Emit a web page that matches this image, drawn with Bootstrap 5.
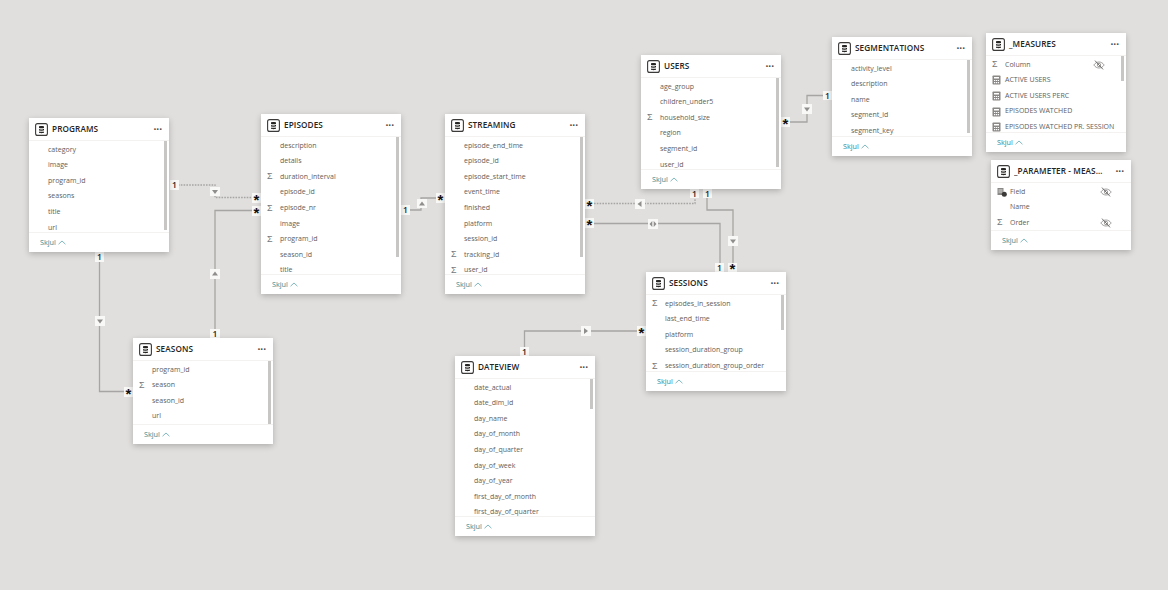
<!DOCTYPE html>
<html lang="en">
<head>
<meta charset="UTF-8">
<title>Model</title>
<link href="https://cdn.jsdelivr.net/npm/bootstrap@5.3.0/dist/css/bootstrap.min.css" rel="stylesheet">
<style>
html, body { margin: 0; background: #e1dfdd; }
#canvas { position: relative; width: 1168px; height: 590px; overflow: hidden; background: #e1dfdd; font-family: "Open Sans", "Liberation Sans", sans-serif; }
#lines { position: absolute; left: 0; top: 0; }
#lines .ln { fill: none; stroke: #a6a5a3; stroke-width: 1.3; }
#lines .dot { stroke-dasharray: 1.6 1.2; }
#lines .bx { fill: #f8f8f7; }
#lines .ar { fill: #8f8e8c; }
#lines text { font-family: "Open Sans", "Liberation Sans", sans-serif; font-size: 8.5px; font-weight: 600; fill: #252423; text-anchor: middle; }
#lines text.st { font-family: "Liberation Sans", sans-serif; font-size: 15px; font-weight: 700; fill: #111; }
.tbl { position: absolute; width: 140px; background: #fff; box-shadow: 0 2px 6px rgba(0,0,0,.22); }
.tbl-head { height: 23px; padding: 0 6px; flex: none; border-bottom: 1px solid #f3f2f1; }
.tbl-title { font-size: 8.2px; font-weight: 600; color: #252423; margin-left: 4px; letter-spacing: .1px; }
.tbl-more { font-size: 10px; font-weight: 700; color: #444; margin-left: auto; padding-right: 1px; line-height: 1; }
.tbl-body { position: relative; flex: 1 1 auto; overflow: hidden; padding-top: 1px; }
.fld { height: 15.6px; padding-left: 6px; font-size: 7px; color: #605e5c; white-space: nowrap; }
.fld-ic { width: 13px; flex: none; font-size: 9px; color: #777; line-height: 1; font-family: "Liberation Sans", sans-serif; }
.tbl-foot { height: 20px; flex: none; padding-left: 11px; border-top: 1px solid #f3f2f1; font-size: 7.2px; color: #2f8c94; }
.tbl-foot svg { margin-left: 2px; }
.sb { position: absolute; top: 0; right: 2px; width: 3px; background: #c8c6c4; }
.eye { margin-left: auto; }
.eye-a { margin-right: 21px; }
.eye-b { margin-right: 19px; }
#t-programs { left: 29px; top: 118px; height: 134px; }
#t-episodes { left: 261px; top: 114px; height: 180px; }
#t-streaming { left: 445px; top: 114px; height: 180px; }
#t-users { left: 641px; top: 55px; height: 134px; }
#t-segments { left: 832px; top: 37px; height: 119px; }
#t-measures { left: 986px; top: 33px; height: 119px; }
#t-param { left: 991px; top: 160px; height: 90px; }
#t-sessions { left: 646px; top: 272px; height: 119px; }
#t-seasons { left: 133px; top: 338px; height: 106px; }
#t-dateview { left: 455px; top: 356px; height: 180px; }
#t-programs .sb { height: 89px; }
#t-episodes .sb, #t-streaming .sb { height: 120px; }
#t-users .sb { height: 89px; }
#t-segments .sb { height: 73px; }
#t-measures .sb { height: 25px; }
#t-sessions .sb { height: 35px; }
#t-seasons .sb { height: 63px; }
#t-dateview .sb { height: 30px; }
</style>
</head>
<body>
<svg width="0" height="0" class="d-block">
  <symbol id="i-table" viewBox="0 0 13 13">
    <rect x=".6" y=".6" width="11.8" height="11.8" rx="2" fill="#fff" stroke="#3b3a39" stroke-width="1.1"/>
    <path d="M4 3.4c0-.7 5-.7 5 0v1.4c0 .7-5 .7-5 0zM4 6c.8.6 4.200.6 5 0v1.300c-.8.6-4.200.6-5 0zM4 8.400c.8.6 4.200.6 5 0v1.200c0 .7-5 .7-5 0z" fill="#252423"/>
  </symbol>
  <symbol id="i-calc" viewBox="0 0 9 10">
    <rect x=".5" y=".5" width="8" height="9" rx=".8" fill="#8a8886"/>
    <path d="M2 2h5v1.500H2z" fill="#fff"/>
    <path d="M2 5h1.200v1H2zM3.900 5h1.200v1H3.900zM5.800 5H7v1H5.800zM2 7h1.200v1.300H2zM3.900 7h1.200v1.300H3.900zM5.800 7H7v1.300H5.800z" fill="#fff"/>
  </symbol>
  <symbol id="i-eye" viewBox="0 0 12 10">
    <path d="M.8 5C2.200 3 4 2 6 2s3.800 1 5.200 3C9.800 7 8 8 6 8S2.200 7 .8 5z" fill="none" stroke="#8a8886" stroke-width=".8"/>
    <circle cx="6" cy="5" r="1.700" fill="none" stroke="#8a8886" stroke-width=".8"/>
    <path d="M2 .6l8 8.800" stroke="#605e5c" stroke-width=".9"/>
  </symbol>
  <symbol id="i-field" viewBox="0 0 10 10">
    <path d="M.5 1h6v7h-6z" fill="#8a8886"/>
    <path d="M1.500 3h4M1.500 5h4" stroke="#fff" stroke-width=".7"/>
    <circle cx="7.300" cy="7.300" r="2.500" fill="#3b3a39"/>
  </symbol>
  <symbol id="i-up" viewBox="0 0 9 5">
    <path d="M.6 4.400 4.500.8l3.900 3.600" fill="none" stroke="#4a9aa3" stroke-width=".8"/>
  </symbol>
</svg>

<div id="canvas">
  <svg id="lines" width="1168" height="590" viewBox="0 0 1168 590">
    <path class="ln dot" d="M178 185H215V197.500H252"/>
    <path class="ln" d="M252 210.500H215V329"/>
    <path class="ln" d="M99.500 262V391.500H124"/>
    <path class="ln" d="M410 210H421V198H436"/>
    <path class="ln dot" d="M594 203.500H695V198"/>
    <path class="ln" d="M594 223.500H720V263"/>
    <path class="ln" d="M707 198V210H733V263"/>
    <path class="ln" d="M790 122H807V95.500H823"/>
    <path class="ln" d="M524.500 347V331H637"/>

    <g>
      <rect class="bx" x="170" y="180" width="9" height="10"/><text x="174.500" y="188">1</text>
      <rect class="bx" x="252" y="193" width="9" height="10"/><text class="st" x="256.500" y="205">*</text>
      <rect class="bx" x="252" y="206" width="9" height="10"/><text class="st" x="256.500" y="218">*</text>
      <rect class="bx" x="95" y="252" width="9" height="10"/><text x="99.500" y="260">1</text>
      <rect class="bx" x="124" y="387" width="9" height="10"/><text class="st" x="128.500" y="399">*</text>
      <rect class="bx" x="210" y="329" width="10" height="9"/><text x="215" y="337">1</text>
      <rect class="bx" x="401" y="205" width="9" height="10"/><text x="405.500" y="213">1</text>
      <rect class="bx" x="436" y="193" width="9" height="10"/><text class="st" x="440.500" y="205">*</text>
      <rect class="bx" x="585" y="199" width="9" height="10"/><text class="st" x="589.500" y="211">*</text>
      <rect class="bx" x="585" y="218" width="9" height="10"/><text class="st" x="589.500" y="230">*</text>
      <rect class="bx" x="690" y="189" width="9" height="9"/><text x="694.500" y="197">1</text>
      <rect class="bx" x="703" y="189" width="9" height="9"/><text x="707.500" y="197">1</text>
      <rect class="bx" x="715" y="263" width="9" height="9"/><text x="719.500" y="271">1</text>
      <rect class="bx" x="728" y="263" width="9" height="9"/><text class="st" x="732.500" y="274">*</text>
      <rect class="bx" x="781" y="117" width="9" height="10"/><text class="st" x="785.500" y="129">*</text>
      <rect class="bx" x="823" y="91" width="9" height="9"/><text x="827.500" y="99">1</text>
      <rect class="bx" x="520" y="347" width="9" height="9"/><text x="524.500" y="355">1</text>
      <rect class="bx" x="637" y="326" width="9" height="10"/><text class="st" x="641.500" y="338">*</text>
    </g>

    <g>
      <rect class="bx" x="210" y="187" width="10" height="9"/><path class="ar" d="M212 190H218L215 194Z"/>
      <rect class="bx" x="210" y="269" width="10" height="10"/><path class="ar" d="M212 275.500H218L215 271.500Z"/>
      <rect class="bx" x="95" y="316" width="10" height="10"/><path class="ar" d="M97 319.500H103L100 323.500Z"/>
      <rect class="bx" x="417" y="199" width="10" height="9"/><path class="ar" d="M419 205.500H425L422 201.500Z"/>
      <rect class="bx" x="635" y="199" width="10" height="10"/><path class="ar" d="M641.500 201V207L637.500 204Z"/>
      <rect class="bx" x="648" y="219" width="10" height="10"/><path class="ar" d="M652.300 221V227L649.500 224ZM653.700 221V227L656.500 224Z"/>
      <rect class="bx" x="728" y="236" width="10" height="10"/><path class="ar" d="M730 239.500H736L733 243.500Z"/>
      <rect class="bx" x="802" y="104" width="10" height="10"/><path class="ar" d="M804 107.500H810L807 111.500Z"/>
      <rect class="bx" x="581" y="326" width="10" height="10"/><path class="ar" d="M584 328V334L588 331Z"/>
    </g>
  </svg>

  <div class="tbl d-flex flex-column" id="t-programs">
    <div class="tbl-head d-flex align-items-center"><svg width="13" height="13"><use href="#i-table"/></svg><span class="tbl-title">PROGRAMS</span><span class="tbl-more">···</span></div>
    <div class="tbl-body">
      <div class="sb"></div>
      <div class="fld d-flex align-items-center"><span class="fld-ic"></span>category</div>
      <div class="fld d-flex align-items-center"><span class="fld-ic"></span>image</div>
      <div class="fld d-flex align-items-center"><span class="fld-ic"></span>program_id</div>
      <div class="fld d-flex align-items-center"><span class="fld-ic"></span>seasons</div>
      <div class="fld d-flex align-items-center"><span class="fld-ic"></span>title</div>
      <div class="fld d-flex align-items-center"><span class="fld-ic"></span>url</div>
    </div>
    <div class="tbl-foot d-flex align-items-center">Skjul<svg width="8" height="5"><use href="#i-up"/></svg></div>
  </div>

  <div class="tbl d-flex flex-column" id="t-episodes">
    <div class="tbl-head d-flex align-items-center"><svg width="13" height="13"><use href="#i-table"/></svg><span class="tbl-title">EPISODES</span><span class="tbl-more">···</span></div>
    <div class="tbl-body">
      <div class="sb"></div>
      <div class="fld d-flex align-items-center"><span class="fld-ic"></span>description</div>
      <div class="fld d-flex align-items-center"><span class="fld-ic"></span>details</div>
      <div class="fld d-flex align-items-center"><span class="fld-ic">Σ</span>duration_interval</div>
      <div class="fld d-flex align-items-center"><span class="fld-ic"></span>episode_id</div>
      <div class="fld d-flex align-items-center"><span class="fld-ic">Σ</span>episode_nr</div>
      <div class="fld d-flex align-items-center"><span class="fld-ic"></span>image</div>
      <div class="fld d-flex align-items-center"><span class="fld-ic">Σ</span>program_id</div>
      <div class="fld d-flex align-items-center"><span class="fld-ic"></span>season_id</div>
      <div class="fld d-flex align-items-center"><span class="fld-ic"></span>title</div>
    </div>
    <div class="tbl-foot d-flex align-items-center">Skjul<svg width="8" height="5"><use href="#i-up"/></svg></div>
  </div>

  <div class="tbl d-flex flex-column" id="t-streaming">
    <div class="tbl-head d-flex align-items-center"><svg width="13" height="13"><use href="#i-table"/></svg><span class="tbl-title">STREAMING</span><span class="tbl-more">···</span></div>
    <div class="tbl-body">
      <div class="sb"></div>
      <div class="fld d-flex align-items-center"><span class="fld-ic"></span>episode_end_time</div>
      <div class="fld d-flex align-items-center"><span class="fld-ic"></span>episode_id</div>
      <div class="fld d-flex align-items-center"><span class="fld-ic"></span>episode_start_time</div>
      <div class="fld d-flex align-items-center"><span class="fld-ic"></span>event_time</div>
      <div class="fld d-flex align-items-center"><span class="fld-ic"></span>finished</div>
      <div class="fld d-flex align-items-center"><span class="fld-ic"></span>platform</div>
      <div class="fld d-flex align-items-center"><span class="fld-ic"></span>session_id</div>
      <div class="fld d-flex align-items-center"><span class="fld-ic">Σ</span>tracking_id</div>
      <div class="fld d-flex align-items-center"><span class="fld-ic">Σ</span>user_id</div>
    </div>
    <div class="tbl-foot d-flex align-items-center">Skjul<svg width="8" height="5"><use href="#i-up"/></svg></div>
  </div>

  <div class="tbl d-flex flex-column" id="t-users">
    <div class="tbl-head d-flex align-items-center"><svg width="13" height="13"><use href="#i-table"/></svg><span class="tbl-title">USERS</span><span class="tbl-more">···</span></div>
    <div class="tbl-body">
      <div class="sb"></div>
      <div class="fld d-flex align-items-center"><span class="fld-ic"></span>age_group</div>
      <div class="fld d-flex align-items-center"><span class="fld-ic"></span>children_under5</div>
      <div class="fld d-flex align-items-center"><span class="fld-ic">Σ</span>household_size</div>
      <div class="fld d-flex align-items-center"><span class="fld-ic"></span>region</div>
      <div class="fld d-flex align-items-center"><span class="fld-ic"></span>segment_id</div>
      <div class="fld d-flex align-items-center"><span class="fld-ic"></span>user_id</div>
    </div>
    <div class="tbl-foot d-flex align-items-center">Skjul<svg width="8" height="5"><use href="#i-up"/></svg></div>
  </div>

  <div class="tbl d-flex flex-column" id="t-segments">
    <div class="tbl-head d-flex align-items-center"><svg width="13" height="13"><use href="#i-table"/></svg><span class="tbl-title">SEGMENTATIONS</span><span class="tbl-more">···</span></div>
    <div class="tbl-body">
      <div class="sb"></div>
      <div class="fld d-flex align-items-center"><span class="fld-ic"></span>activity_level</div>
      <div class="fld d-flex align-items-center"><span class="fld-ic"></span>description</div>
      <div class="fld d-flex align-items-center"><span class="fld-ic"></span>name</div>
      <div class="fld d-flex align-items-center"><span class="fld-ic"></span>segment_id</div>
      <div class="fld d-flex align-items-center"><span class="fld-ic"></span>segment_key</div>
    </div>
    <div class="tbl-foot d-flex align-items-center">Skjul<svg width="8" height="5"><use href="#i-up"/></svg></div>
  </div>

  <div class="tbl d-flex flex-column" id="t-measures">
    <div class="tbl-head d-flex align-items-center"><svg width="13" height="13"><use href="#i-table"/></svg><span class="tbl-title">_MEASURES</span><span class="tbl-more">···</span></div>
    <div class="tbl-body">
      <div class="sb"></div>
      <div class="fld d-flex align-items-center"><span class="fld-ic">Σ</span>Column<svg class="eye eye-a" width="12" height="10"><use href="#i-eye"/></svg></div>
      <div class="fld d-flex align-items-center"><span class="fld-ic"><svg width="9" height="10" class="d-block"><use href="#i-calc"/></svg></span>ACTIVE USERS</div>
      <div class="fld d-flex align-items-center"><span class="fld-ic"><svg width="9" height="10" class="d-block"><use href="#i-calc"/></svg></span>ACTIVE USERS PERC</div>
      <div class="fld d-flex align-items-center"><span class="fld-ic"><svg width="9" height="10" class="d-block"><use href="#i-calc"/></svg></span>EPISODES WATCHED</div>
      <div class="fld d-flex align-items-center"><span class="fld-ic"><svg width="9" height="10" class="d-block"><use href="#i-calc"/></svg></span>EPISODES WATCHED PR. SESSION</div>
    </div>
    <div class="tbl-foot d-flex align-items-center">Skjul<svg width="8" height="5"><use href="#i-up"/></svg></div>
  </div>

  <div class="tbl d-flex flex-column" id="t-param">
    <div class="tbl-head d-flex align-items-center"><svg class="flex-shrink-0" width="13" height="13"><use href="#i-table"/></svg><span class="tbl-title text-truncate">_PARAMETER - MEASURES</span><span class="tbl-more ps-2">···</span></div>
    <div class="tbl-body">
      <div class="fld d-flex align-items-center"><span class="fld-ic"><svg width="10" height="10" class="d-block"><use href="#i-field"/></svg></span>Field<svg class="eye eye-b" width="12" height="10"><use href="#i-eye"/></svg></div>
      <div class="fld d-flex align-items-center"><span class="fld-ic"></span>Name</div>
      <div class="fld d-flex align-items-center"><span class="fld-ic">Σ</span>Order<svg class="eye eye-b" width="12" height="10"><use href="#i-eye"/></svg></div>
    </div>
    <div class="tbl-foot d-flex align-items-center">Skjul<svg width="8" height="5"><use href="#i-up"/></svg></div>
  </div>

  <div class="tbl d-flex flex-column" id="t-sessions">
    <div class="tbl-head d-flex align-items-center"><svg width="13" height="13"><use href="#i-table"/></svg><span class="tbl-title">SESSIONS</span><span class="tbl-more">···</span></div>
    <div class="tbl-body">
      <div class="sb"></div>
      <div class="fld d-flex align-items-center"><span class="fld-ic">Σ</span>episodes_in_session</div>
      <div class="fld d-flex align-items-center"><span class="fld-ic"></span>last_end_time</div>
      <div class="fld d-flex align-items-center"><span class="fld-ic"></span>platform</div>
      <div class="fld d-flex align-items-center"><span class="fld-ic"></span>session_duration_group</div>
      <div class="fld d-flex align-items-center"><span class="fld-ic">Σ</span>session_duration_group_order</div>
    </div>
    <div class="tbl-foot d-flex align-items-center">Skjul<svg width="8" height="5"><use href="#i-up"/></svg></div>
  </div>

  <div class="tbl d-flex flex-column" id="t-seasons">
    <div class="tbl-head d-flex align-items-center"><svg width="13" height="13"><use href="#i-table"/></svg><span class="tbl-title">SEASONS</span><span class="tbl-more">···</span></div>
    <div class="tbl-body">
      <div class="sb"></div>
      <div class="fld d-flex align-items-center"><span class="fld-ic"></span>program_id</div>
      <div class="fld d-flex align-items-center"><span class="fld-ic">Σ</span>season</div>
      <div class="fld d-flex align-items-center"><span class="fld-ic"></span>season_id</div>
      <div class="fld d-flex align-items-center"><span class="fld-ic"></span>url</div>
    </div>
    <div class="tbl-foot d-flex align-items-center">Skjul<svg width="8" height="5"><use href="#i-up"/></svg></div>
  </div>

  <div class="tbl d-flex flex-column" id="t-dateview">
    <div class="tbl-head d-flex align-items-center"><svg width="13" height="13"><use href="#i-table"/></svg><span class="tbl-title">DATEVIEW</span><span class="tbl-more">···</span></div>
    <div class="tbl-body">
      <div class="sb"></div>
      <div class="fld d-flex align-items-center"><span class="fld-ic"></span>date_actual</div>
      <div class="fld d-flex align-items-center"><span class="fld-ic"></span>date_dim_id</div>
      <div class="fld d-flex align-items-center"><span class="fld-ic"></span>day_name</div>
      <div class="fld d-flex align-items-center"><span class="fld-ic"></span>day_of_month</div>
      <div class="fld d-flex align-items-center"><span class="fld-ic"></span>day_of_quarter</div>
      <div class="fld d-flex align-items-center"><span class="fld-ic"></span>day_of_week</div>
      <div class="fld d-flex align-items-center"><span class="fld-ic"></span>day_of_year</div>
      <div class="fld d-flex align-items-center"><span class="fld-ic"></span>first_day_of_month</div>
      <div class="fld d-flex align-items-center"><span class="fld-ic"></span>first_day_of_quarter</div>
    </div>
    <div class="tbl-foot d-flex align-items-center">Skjul<svg width="8" height="5"><use href="#i-up"/></svg></div>
  </div>
</div>
<script src="https://cdn.jsdelivr.net/npm/bootstrap@5.3.0/dist/js/bootstrap.bundle.min.js"></script>
</body>
</html>
